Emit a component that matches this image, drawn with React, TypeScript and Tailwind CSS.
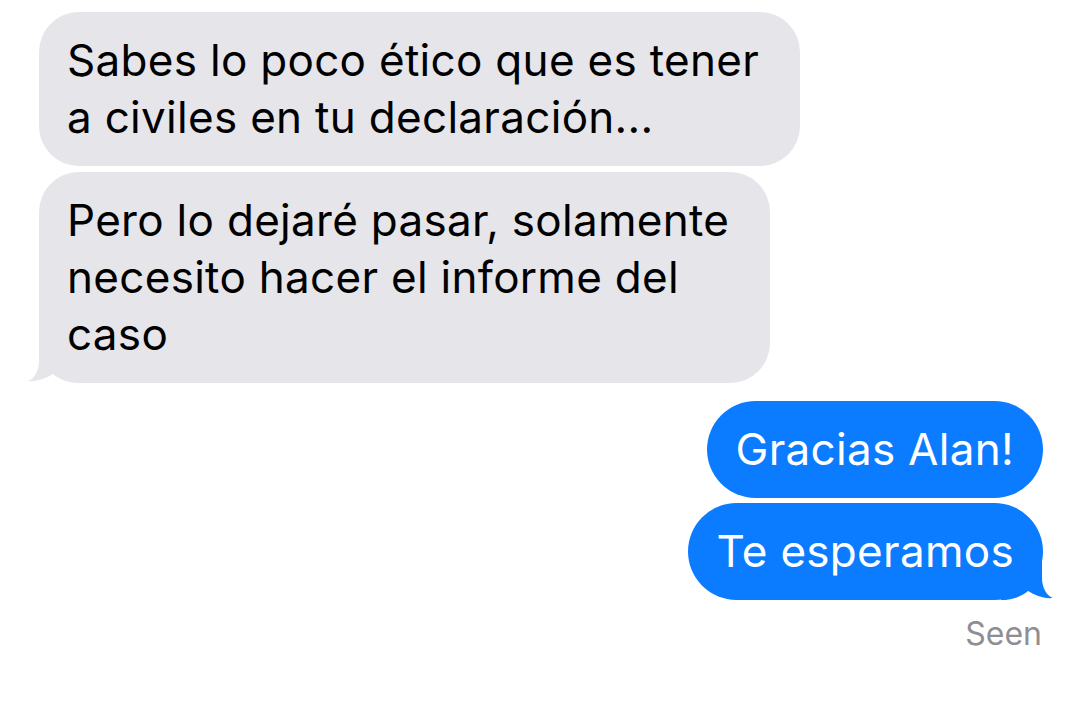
const font = { fontFamily: "Inter, 'Noto Sans', sans-serif" };

function ReceivedTail() {
  return (
    <svg
      className="absolute bottom-0 left-[-13px]"
      width="54"
      height="52"
      viewBox="0 0 54 52"
    >
      <path
        d="M13 0 L13 30 C13 40 8 48 2 50 C12 51 20 47 27 43 C33 48 42 52 54 52 L54 0 Z"
        fill="#e5e5ea"
      />
    </svg>
  );
}

function SentTail() {
  return (
    <svg
      className="absolute bottom-0 right-[-12px]"
      width="54"
      height="52"
      viewBox="0 0 54 52"
    >
      <path
        d="M41 0 L41 30 C41 40 46 48 52 50 C42 51 34 47 27 43 C21 48 12 52 0 52 L0 0 Z"
        fill="#0b7cff"
      />
    </svg>
  );
}

interface BubbleProps {
  lines: string[];
  tail?: boolean;
}

function Received({ lines, tail }: BubbleProps) {
  return (
    <div className="relative self-start rounded-[40px] bg-[#e5e5ea] py-[20px] pl-[28px] pr-[41px] text-[44px] leading-[57px] tracking-[0.3px] text-black">
      {tail && <ReceivedTail />}
      <div className="relative">
        {lines.map((l, i) => (
          <div key={i} className="whitespace-nowrap">
            {l}
          </div>
        ))}
      </div>
    </div>
  );
}

function Sent({ lines, tail }: BubbleProps) {
  return (
    <div className="relative self-end rounded-[49px] bg-[#0b7cff] py-[20px] px-[29px] text-[44px] leading-[57px] tracking-[0.3px] text-white">
      {tail && <SentTail />}
      <div className="relative">
        {lines.map((l, i) => (
          <div key={i} className="whitespace-nowrap">
            {l}
          </div>
        ))}
      </div>
    </div>
  );
}

export default function App() {
  return (
    <div
      className="flex h-[713px] w-[1080px] flex-col overflow-hidden bg-white pt-[12px] pl-[39px] pr-[37px]"
      style={font}
    >
      <div className="flex flex-col gap-[6px]">
        <Received
          lines={["Sabes lo poco ético que es tener", "a civiles en tu declaración..."]}
        />
        <Received
          lines={["Pero lo dejaré pasar, solamente", "necesito hacer el informe del", "caso"]}
          tail
        />
      </div>
      <div className="mt-[18px] flex flex-col gap-[5px]">
        <Sent lines={["Gracias Alan!"]} />
        <Sent lines={["Te esperamos"]} tail />
      </div>
      <div className="mt-[14px] self-end pr-[1px] text-[32px] leading-[40px] text-[#8e8e93]">
        Seen
      </div>
    </div>
  );
}
